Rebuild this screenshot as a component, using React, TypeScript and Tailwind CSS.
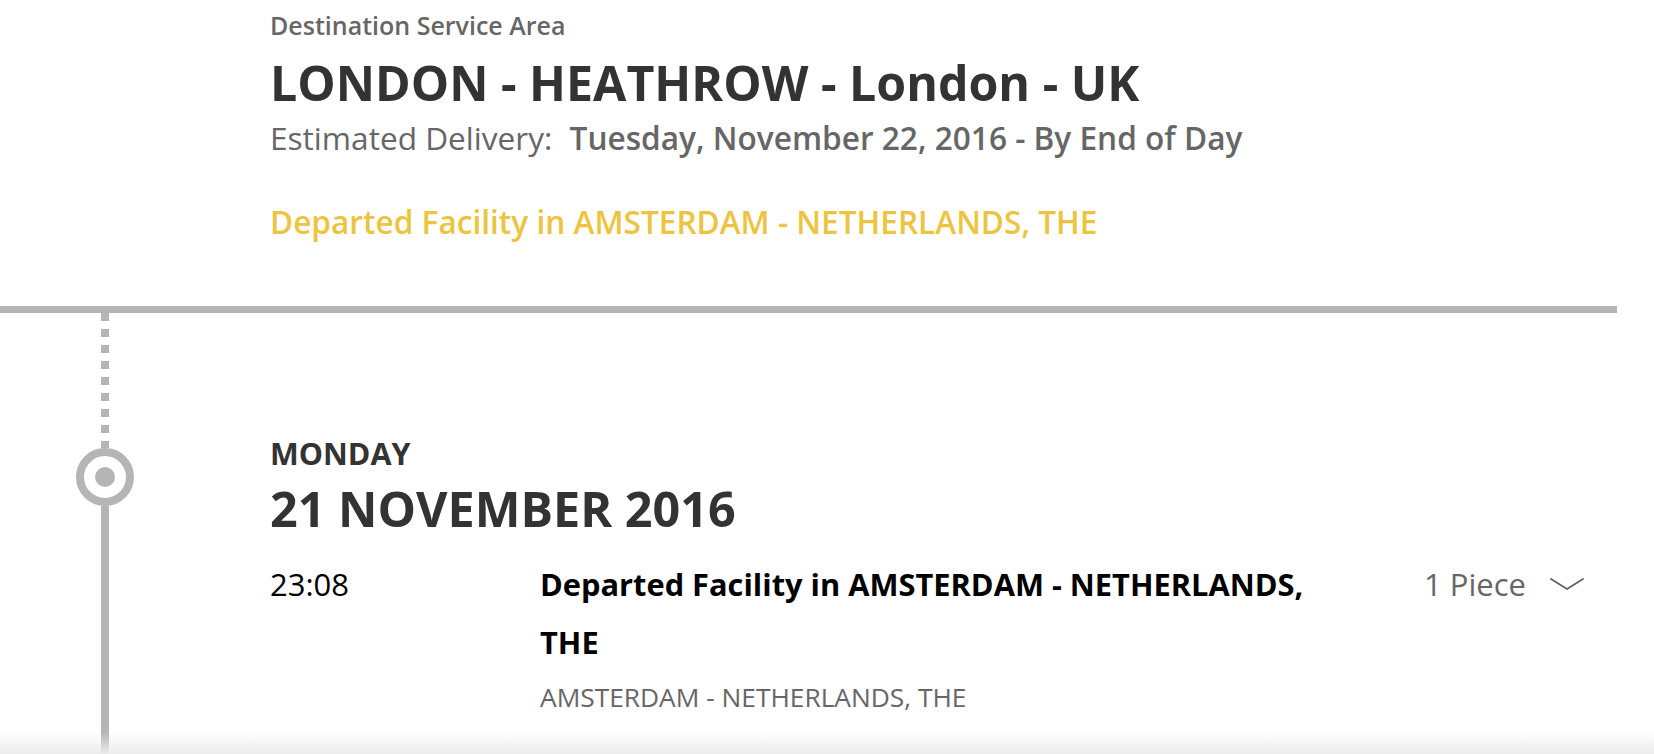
const events = [
  {
    time: '23:08',
    title: 'Departed Facility in AMSTERDAM - NETHERLANDS, THE',
    place: 'AMSTERDAM - NETHERLANDS, THE',
    pieces: '1 Piece',
  },
];

function TimelineRail() {
  return (
    <div className="w-[210px] shrink-0 flex flex-col items-center">
      <div className="w-[8px] h-[135px] bg-[repeating-linear-gradient(to_bottom,#b5b5b5_0px,#b5b5b5_8px,transparent_8px,transparent_16px)]" />
      <div className="w-[58px] h-[58px] rounded-full border-[8px] border-[#b5b5b5] flex items-center justify-center">
        <div className="w-[20px] h-[20px] rounded-full bg-[#b5b5b5]" />
      </div>
      <div className="w-[8px] flex-1 bg-[#b5b5b5]" />
    </div>
  );
}

export default function App() {
  return (
    <div className="relative w-full h-[754px] overflow-hidden bg-white font-['Open_Sans',sans-serif]">
      <div className="pl-[270px] pt-[10px]">
        <p className="text-[25px] leading-[30px] font-semibold text-[#666666]">
          Destination Service Area
        </p>
        <h1 className="mt-[14px] text-[48.3px] leading-[56px] font-bold text-[#333333]">
          LONDON - HEATHROW - London - UK
        </h1>
        <p className="mt-[8px] text-[31.6px] leading-[40px] text-[#666666]">
          Estimated Delivery:{' '}
          <span className="ml-[9px] font-semibold">
            Tuesday, November 22, 2016 - By End of Day
          </span>
        </p>
        <p className="mt-[44px] text-[31.6px] leading-[40px] font-semibold text-[#ecc440]">
          Departed Facility in AMSTERDAM - NETHERLANDS, THE
        </p>
      </div>

      <div className="mt-[64px] w-[1617px] h-[7px] bg-[#b5b5b5]" />

      <div className="flex h-[441px]">
        <TimelineRail />
        <div className="ml-[60px] pt-[120px] flex-1 pr-[70px]">
          <p className="text-[30.5px] leading-[40px] font-bold text-[#333333]">MONDAY</p>
          <h2 className="mt-[7px] text-[48.5px] leading-[56px] font-bold text-[#333333]">
            21 NOVEMBER 2016
          </h2>

          {events.map((ev) => (
            <div key={ev.time} className="mt-[19px] flex items-start">
              <div className="w-[270px] shrink-0 text-[31px] leading-[58px] text-black">
                {ev.time}
              </div>
              <div className="w-[820px] shrink-0">
                <p className="text-[30.8px] leading-[58px] font-bold text-black">{ev.title}</p>
                <p className="mt-[8px] text-[26.3px] leading-[36px] text-[#666666]">{ev.place}</p>
              </div>
              <div className="ml-auto flex items-center h-[58px] gap-[24px]">
                <span className="text-[31px] text-[#666666]">{ev.pieces}</span>
                <svg width="34" height="14" viewBox="0 0 34 14" fill="none">
                  <path d="M1 2 L17 12 L33 2" stroke="#666666" strokeWidth="2" strokeLinecap="round" strokeLinejoin="round" />
                </svg>
              </div>
            </div>
          ))}
        </div>
      </div>

      <div className="pointer-events-none absolute bottom-0 left-0 right-0 h-[22px] bg-linear-to-b from-transparent to-[#ececec]" />
    </div>
  );
}
